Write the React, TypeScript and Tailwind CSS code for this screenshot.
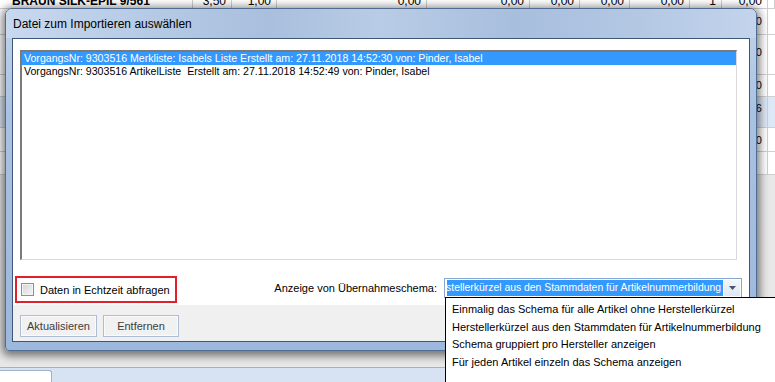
import React from "react";

const topCells = [
  { w: 193, t: "BRAUN SILK-EPIL 9/561", r: false },
  { w: 39, t: "3,50", r: true },
  { w: 45, t: "1,00", r: true },
  { w: 150, t: "0,00", r: true },
  { w: 103, t: "0,00", r: true },
  { w: 50, t: "0,00", r: true },
  { w: 50, t: "0,00", r: true },
  { w: 60, t: "0,00", r: true },
  { w: 32, t: "1", r: true },
  { w: 46, t: "0,00", r: true },
  { w: 7, t: "", r: false },
];

const sheetRows = [
  { h: 26, d: "0,00", pt: 6, blue: false },
  { h: 40, d: "0,00", pt: 11, blue: false },
  { h: 22, d: "0,00", pt: 4, blue: false },
  { h: 31, d: "1,56", pt: 5, blue: true },
  { h: 24, d: "0,00", pt: 6, blue: false },
  { h: 23, d: "", pt: 0, blue: false },
];

const options = [
  "Einmalig das Schema für alle Artikel ohne Herstellerkürzel",
  "Herstellerkürzel aus den Stammdaten für Artikelnummerbildung",
  "Schema gruppiert pro Hersteller anzeigen",
  "Für jeden Artikel einzeln das Schema anzeigen",
];

export default function App() {
  return (
    <div className="relative w-[775px] h-[382px] overflow-hidden bg-[#e6e6e6] font-['Liberation_Sans',Arial,sans-serif] text-black">
      {/* background sheet */}
      <div className="flex flex-col h-full">
        <div className="flex h-[9px] overflow-hidden bg-white border-b border-[#cfcfcf]">
          {topCells.map((c, i) => (
            <div
              key={i}
              className="shrink-0 overflow-hidden border-r border-[#cfcfcf]"
              style={{ width: c.w }}
            >
              <div
                className={
                  "-mt-[5px] px-[5px] text-[12px] leading-[12px] whitespace-nowrap " +
                  (c.r ? "text-right" : "text-left pl-[12px] font-bold")
                }
              >
                {c.t}
              </div>
            </div>
          ))}
        </div>
        {sheetRows.map((r, i) => (
          <div
            key={i}
            className={
              "flex shrink-0 border-b border-[#cfcfcf] " +
              (r.blue ? "bg-[#dde8f6]" : "bg-white")
            }
            style={{ height: r.h }}
          >
            <div className="w-[722px] shrink-0" />
            <div
              className="w-[46px] shrink-0 border-l border-r border-[#cfcfcf] text-right pr-[5px] text-[11px] leading-[12px]"
              style={{ paddingTop: r.pt }}
            >
              {r.d}
            </div>
            <div className="flex-1" />
          </div>
        ))}
        <div className="flex-1 bg-[#e8e8e8]" />
        <div className="h-[15px] shrink-0 border-t border-[#9fb2cb] bg-[#d7e3f3] flex items-end">
          <div className="w-[52px] h-[12px] bg-white border-t border-r border-[#9fb2cb] rounded-tr-[3px]" />
        </div>
      </div>

      {/* dialog window */}
      <div className="absolute left-[5px] top-[8px] w-[752px] h-[343px] flex flex-col rounded-t-[7px] rounded-b-[4px] border border-[#506c90] bg-[linear-gradient(to_bottom,#c2d4eb,#aac2e2_30%,#9db8dd)] px-[6px] pb-[8px] shadow-[0_2px_9px_3px_rgba(0,0,0,0.5)]">
        <div className="-mx-[6px] h-[29px] shrink-0 flex items-center pl-[7px] pt-[1px] rounded-t-[6px] bg-[linear-gradient(to_right,#c8d8ee,#b7cbe6_18%,#a9bfdd_35%,#b9cce6_50%,#a7bedd_68%,#b4c8e4_85%,#c3d4ec)] text-[12px] leading-[14px]">
          Datei zum Importieren auswählen
        </div>
        <div className="flex-1 flex flex-col border border-[#3e5677] bg-[#f0f0f0]">
          <div className="bg-white pt-[11px] pb-[2px]">
            <div className="ml-[7px] w-[717px] h-[210px] border-t-2 border-l-2 border-r border-b border-t-[#7a7a7a] border-l-[#7a7a7a] border-r-[#dadada] border-b-[#dadada] bg-white text-[10.6px]">
              <div className="h-[13px] leading-[13px] bg-[#3399ff] text-white pl-[2px] whitespace-nowrap">
                VorgangsNr: 9303516 Merkliste: Isabels Liste Erstellt am: 27.11.2018 14:52:30 von: Pinder, Isabel
              </div>
              <div className="h-[13px] leading-[13px] pl-[2px] whitespace-pre">
                VorgangsNr: 9303516 ArtikelListe  Erstellt am: 27.11.2018 14:52:49 von: Pinder, Isabel
              </div>
            </div>
            <div className="flex items-start mt-[16px] pl-[2px] pr-[7px] text-[11px]">
              <div className="w-[162px] h-[27px] border-2 border-[#e2202b] flex items-center pl-[4px]">
                <div className="w-[13px] h-[13px] border border-[#8e8f8f] bg-[linear-gradient(135deg,#d4d4d4,#f6f6f6)] shadow-[inset_0_0_0_1px_#f4f4f4]" />
                <span className="ml-[6px] leading-[14px]">Daten in Echtzeit abfragen</span>
              </div>
              <div className="ml-auto mr-[7px] mt-[2px] h-[20px] flex items-center leading-[14px]">
                Anzeige von Übernahmeschema:
              </div>
              <div className="mt-[2px] w-[298px] h-[20px] border border-[#84a6d3] bg-white flex p-[1px]">
                <div className="flex-1 ml-[1px] mr-[1px] bg-[#3399ff] text-white flex justify-end overflow-hidden whitespace-nowrap leading-[16px] pr-[2px] text-[10.4px]">
                  <span>Herstellerkürzel aus den Stammdaten für Artikelnummerbildung</span>
                </div>
                <div className="w-[16px] flex items-center justify-center bg-[linear-gradient(to_bottom,#f2f6fb,#dde7f3)]">
                  <svg width="7" height="4" viewBox="0 0 7 4">
                    <path d="M0 0h7L3.5 4z" fill="#45556f" />
                  </svg>
                </div>
              </div>
            </div>
          </div>
          <div className="flex-1 flex items-start pt-[10px] pl-[7px] gap-[6px] text-[11px] text-[#3c3c3c]">
            <div className="w-[77px] h-[22px] border border-[#aebdd3] bg-[#f1f1f1] shadow-[inset_0_0_0_1px_#fbfbfb] flex items-center justify-center">
              Aktualisieren
            </div>
            <div className="w-[76px] h-[22px] border border-[#aebdd3] bg-[#f1f1f1] shadow-[inset_0_0_0_1px_#fbfbfb] flex items-center justify-center">
              Entfernen
            </div>
          </div>
        </div>
      </div>

      {/* dropdown list overlay */}
      <div className="absolute left-[445px] top-[297px] w-[340px] h-[100px] border border-black bg-white pt-[3px] pl-[6px] text-[11px]">
        {options.map((o) => (
          <div key={o} className="h-[17.5px] leading-[17.5px] whitespace-nowrap">
            {o}
          </div>
        ))}
      </div>
    </div>
  );
}
